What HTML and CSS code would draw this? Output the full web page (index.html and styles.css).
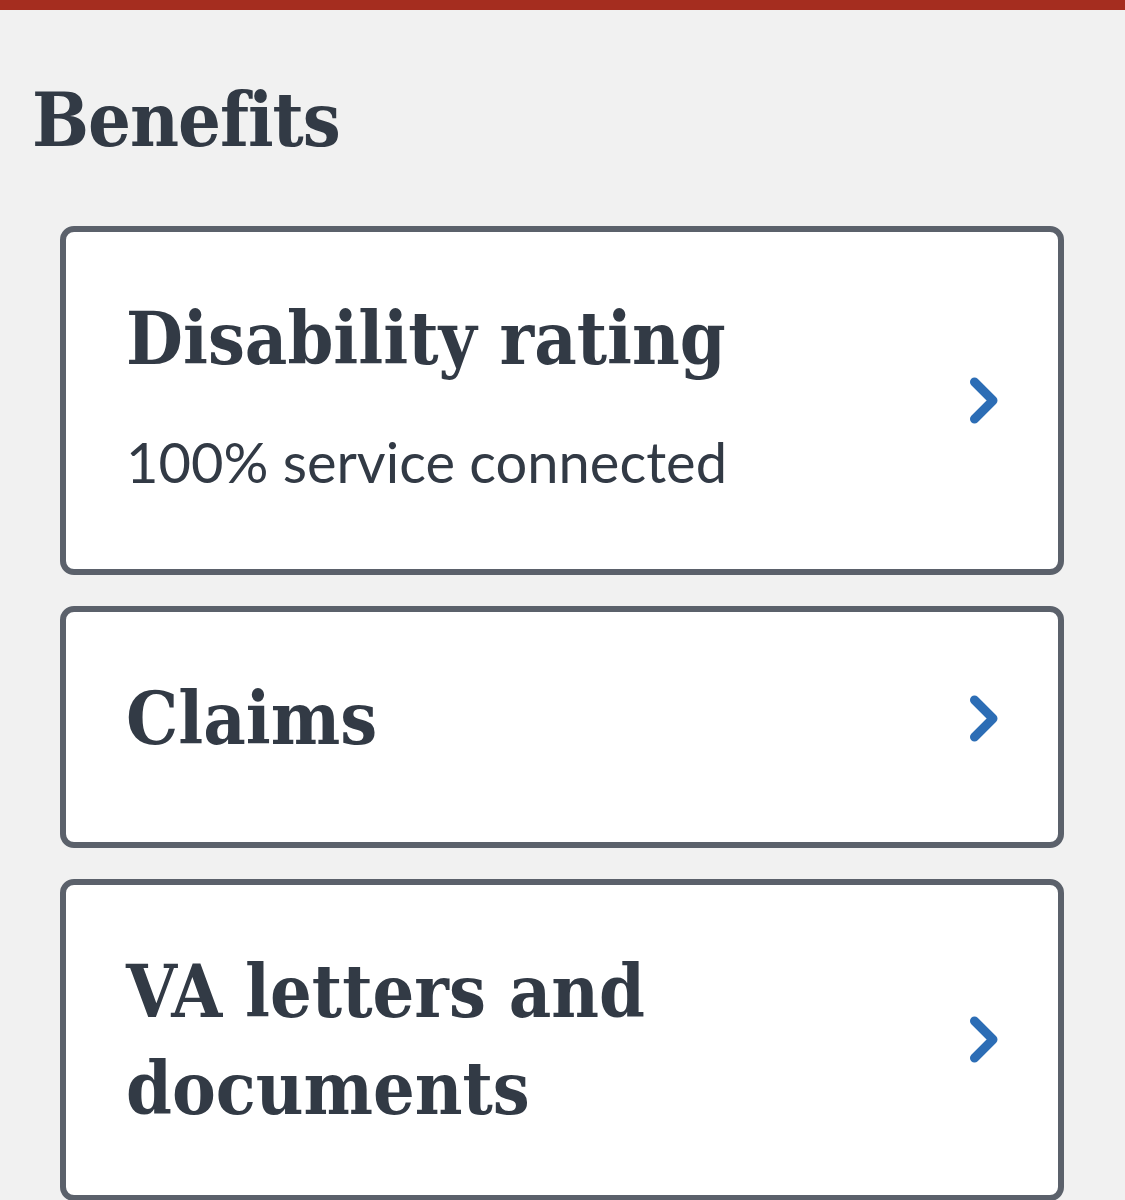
FILE: index.html
```html
<!DOCTYPE html>
<html lang="en">
<head>
<meta charset="utf-8">
<title>Benefits</title>
<link rel="stylesheet" href="styles.css">
</head>
<body>
<div class="topbar"></div>
<main class="page">
  <h2 class="section-title">Benefits</h2>
  <ul class="cards">
    <li>
      <a class="card" href="#">
        <div class="card-row">
          <div class="card-text">
            <h3 class="card-title">Disability rating</h3>
            <p class="card-sub">100% service connected</p>
          </div>
          <svg class="chev" viewBox="0 0 30 48" aria-hidden="true"><polyline points="5.5,5 24,23.5 5.5,42"/></svg>
        </div>
      </a>
    </li>
    <li>
      <a class="card" href="#">
        <div class="card-row">
          <div class="card-text">
            <h3 class="card-title">Claims</h3>
          </div>
          <svg class="chev" viewBox="0 0 30 48" aria-hidden="true"><polyline points="5.5,5 24,23.5 5.5,42"/></svg>
        </div>
      </a>
    </li>
    <li>
      <a class="card" href="#">
        <div class="card-row">
          <div class="card-text">
            <h3 class="card-title">VA letters and documents</h3>
          </div>
          <svg class="chev" viewBox="0 0 30 48" aria-hidden="true"><polyline points="5.5,5 24,23.5 5.5,42"/></svg>
        </div>
      </a>
    </li>
  </ul>
</main>
</body>
</html>
```
FILE: styles.css
```css
html, body {
  margin: 0;
  padding: 0;
  background: #f1f1f1;
}

body {
  color: #323a45;
  font-family: "Lato", "Open Sans", sans-serif;
}

.topbar {
  height: 10px;
  background: #a52d1f;
}

.page {
  padding: 62px 61px 0 60px;
}

.section-title {
  margin: 0 0 57px -28px;
  font-family: "DejaVu Serif Condensed", "DejaVu Serif", serif;
  font-stretch: condensed;
  font-weight: 700;
  font-size: 75px;
  line-height: 97px;
  letter-spacing: -1px;
}

.cards {
  list-style: none;
  margin: 0;
  padding: 0;
  display: flex;
  flex-direction: column;
  gap: 31px;
}

.card {
  box-sizing: border-box;
  display: block;
  min-height: 242px;
  padding: 58px 59px 58px 60px;
  background: #fff;
  border: 6px solid #5b616b;
  border-radius: 14px;
  color: inherit;
  text-decoration: none;
}

.card-row {
  display: flex;
  align-items: center;
  justify-content: space-between;
  gap: 40px;
}

.card-text {
  flex: 1;
  max-width: 760px;
}

.card-title {
  margin: 0;
  font-family: "DejaVu Serif Condensed", "DejaVu Serif", serif;
  font-stretch: condensed;
  font-weight: 700;
  font-size: 73px;
  line-height: 97px;
}

.card-sub {
  margin: 25px 0 0;
  font-family: "Lato", "Open Sans", sans-serif;
  font-size: 56px;
  line-height: 99px;
  font-weight: 400;
}

.chev {
  flex: none;
  width: 30px;
  height: 48px;
  fill: none;
  stroke: #2c6db5;
  stroke-width: 9;
  stroke-linecap: round;
  stroke-linejoin: round;
}
```
